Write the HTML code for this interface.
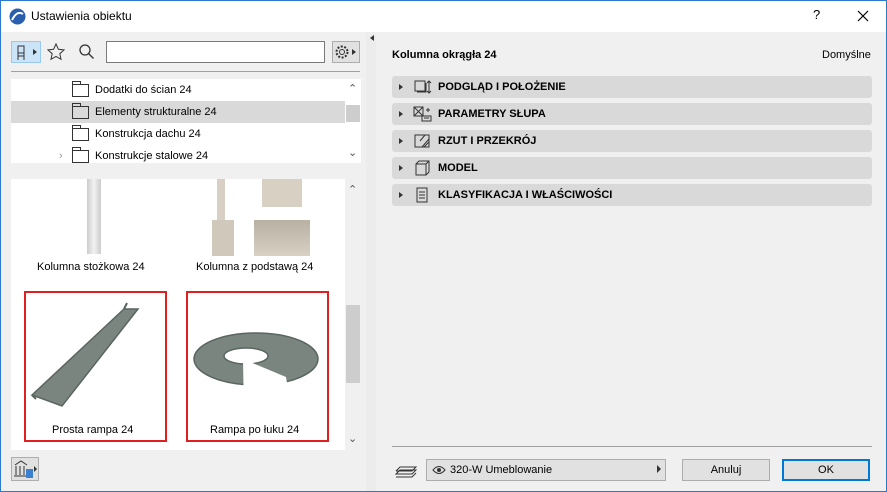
<!DOCTYPE html><html><head><style>
*{margin:0;padding:0;box-sizing:border-box}
body{width:887px;height:492px;overflow:hidden;font-family:"Liberation Sans",sans-serif;font-size:11px;color:#000;background:#f0f0f0;position:relative}
.a{position:absolute}
.win{left:0;top:0;width:887px;height:492px;border:1px solid #2b79d0}
.title{left:1px;top:1px;width:885px;height:31px;background:#fff}
.sec{height:22px;background:#d9d9d9;border-radius:3px;left:392px;width:480px;font-weight:bold;font-size:11px;line-height:22px}
.sec .t{position:absolute;left:46px}
.sec .ar{position:absolute;left:7px;top:8px;border-left:4px solid #333;border-top:3px solid transparent;border-bottom:3px solid transparent}
.sec svg{position:absolute;left:21px;top:3px}
.row{left:11px;width:334px;height:22px;line-height:22px;font-size:11px}
.fold{position:absolute;left:61px;top:5px;width:17px;height:13px;border:1px solid #333}
.fold:before{content:"";position:absolute;left:-1px;top:-4px;width:7px;height:3px;border:1px solid #333;border-bottom:none}
.btn{background:#e1e1e1;border:1px solid #adadad;text-align:center;font-size:12px}
</style></head><body>
<div class="a win"></div>
<div class="a title"></div>
<svg class="a" style="left:9px;top:8px" width="17" height="17"><circle cx="8.5" cy="8.5" r="8" fill="#2a5fb0"/><path d="M3 12 Q8 2 14 6" stroke="#fff" stroke-width="2" fill="none"/></svg>
<div class="a" style="left:31px;top:9px;font-size:12px">Ustawienia obiektu</div>
<div class="a" style="left:813px;top:7px;font-size:13px">?</div>
<svg class="a" style="left:857px;top:10px" width="12" height="12"><path d="M1 1L11 11M11 1L1 11" stroke="#000" stroke-width="1.2"/></svg>
<div class="a" style="left:366px;top:33px;width:10px;height:458px;background:#ececec"></div>
<div class="a" style="left:370px;top:35px;border-right:4px solid #333;border-top:3px solid transparent;border-bottom:3px solid transparent"></div>
<div class="a" style="left:11px;top:41px;width:30px;height:22px;background:#cce4f7;border:1px solid #99c9ef"></div>
<svg class="a" style="left:15px;top:44px" width="24" height="17"><path d="M3 2h6v7H3zM3 9v7M9 9v7M3 12h6" stroke="#333" fill="none"/><path d="M18 5l4 3-4 3z" fill="#333"/></svg>
<svg class="a" style="left:46px;top:42px" width="20" height="20"><path d="M10 2l2.4 5.3 5.6.6-4.2 3.8 1.2 5.6L10 14.4l-5 2.9 1.2-5.6L2 7.9l5.6-.6z" stroke="#333" fill="none"/></svg>
<svg class="a" style="left:78px;top:43px" width="18" height="18"><circle cx="7" cy="7" r="5" stroke="#333" fill="none" stroke-width="1.3"/><path d="M10.5 10.5l5 5" stroke="#333" stroke-width="1.3"/></svg>
<div class="a" style="left:106px;top:41px;width:219px;height:22px;background:#fff;border:1px solid #7a7a7a"></div>
<div class="a" style="left:332px;top:41px;width:28px;height:22px;background:#e1e1e1;border:1px solid #adadad"></div>
<svg class="a" style="left:334px;top:44px" width="24" height="17"><circle cx="8" cy="8" r="5.5" stroke="#333" fill="none" stroke-dasharray="2 1.5" stroke-width="2"/><circle cx="8" cy="8" r="2.5" stroke="#333" fill="none"/><path d="M18 5l4 3-4 3z" fill="#333"/></svg>
<div class="a" style="left:11px;top:71px;width:349px;height:1px;background:#a0a0a0"></div>
<div class="a" style="left:11px;top:79px;width:334px;height:84px;background:#fff"></div>
<div class="a" style="left:345px;top:79px;width:16px;height:84px;background:#fff"></div>
<div class="a" style="left:346px;top:105px;width:14px;height:17px;background:#cdcdcd"></div>
<div class="a" style="left:348px;top:82px;font-size:11px;color:#555">&#8963;</div>
<div class="a" style="left:348px;top:146px;font-size:11px;color:#555">&#8964;</div>
<div class="a row" style="top:79px"><div class="fold"></div><span style="position:absolute;left:84px">Dodatki do ścian 24</span></div>
<div class="a row" style="top:101px;background:#d9d9d9"><div class="fold"></div><span style="position:absolute;left:84px">Elementy strukturalne 24</span></div>
<div class="a row" style="top:123px"><div class="fold"></div><span style="position:absolute;left:84px">Konstrukcja dachu 24</span></div>
<div class="a row" style="top:145px"><span style="position:absolute;left:48px;color:#999">&#8250;</span><div class="fold"></div><span style="position:absolute;left:84px">Konstrukcje stalowe 24</span></div>
<div class="a" style="left:11px;top:179px;width:334px;height:271px;background:#fff"></div>
<div class="a" style="left:345px;top:179px;width:16px;height:271px;background:#f0f0f0"></div>
<div class="a" style="left:346px;top:305px;width:14px;height:78px;background:#cdcdcd"></div>
<div class="a" style="left:348px;top:183px;font-size:11px;color:#555">&#8963;</div>
<div class="a" style="left:348px;top:432px;font-size:11px;color:#555">&#8964;</div>
<div class="a" style="left:87px;top:179px;width:14px;height:75px;background:linear-gradient(90deg,#ccc,#f2f2f2,#ccc)"></div>
<div class="a" style="left:217px;top:179px;width:8px;height:50px;background:#d8d0c4"></div>
<div class="a" style="left:212px;top:220px;width:22px;height:36px;background:#d0c8ba"></div>
<div class="a" style="left:262px;top:179px;width:40px;height:28px;background:#d8d0c2"></div>
<div class="a" style="left:254px;top:220px;width:56px;height:36px;background:linear-gradient(#b8b0a2,#d8d0c2)"></div>
<div class="a" style="left:37px;top:261px;font-size:11px">Kolumna stożkowa 24</div>
<div class="a" style="left:196px;top:261px;font-size:11px">Kolumna z podstawą 24</div>
<div class="a" style="left:24px;top:291px;width:143px;height:151px;border:2px solid #e02020"></div>
<div class="a" style="left:186px;top:291px;width:143px;height:151px;border:2px solid #e02020"></div>
<svg class="a" style="left:26px;top:293px" width="140" height="120"><path d="M6 102L98 16l14 0L36 113z" fill="#7a8580" stroke="#5a6560" stroke-width="1.5"/><path d="M6 102l4 4M98 16l3-6" stroke="#5a6560" stroke-width="2"/></svg>
<svg class="a" style="left:188px;top:293px" width="140" height="120"><path fill-rule="evenodd" d="M6 66a62 26 0 1 0 124 0a62 26 0 1 0 -124 0zM36 63a22 8 0 1 0 44 0a22 8 0 1 0 -44 0z" fill="#7a8580" stroke="#5a6560" stroke-width="1.5"/><path d="M55 66L56 120L104 120L98 84Z" fill="#fff"/></svg>
<div class="a" style="left:52px;top:424px;font-size:11px">Prosta rampa 24</div>
<div class="a" style="left:210px;top:424px;font-size:11px">Rampa po łuku 24</div>
<div class="a" style="left:11px;top:457px;width:28px;height:24px;background:#e1e1e1;border:1px solid #adadad"></div>
<svg class="a" style="left:13px;top:459px" width="25" height="21"><path d="M2 6L8 2 14 6M3 7v9M7 7v9M11 7v9M1 17h14" stroke="#333" fill="none"/><rect x="13" y="10" width="7" height="9" fill="#3a7fd0"/><path d="M21 7l3 3-3 3z" fill="#333"/></svg>
<div class="a" style="left:392px;top:49px;font-weight:bold;font-size:11px">Kolumna okrągła 24</div>
<div class="a" style="left:822px;top:49px;font-size:11px">Domyślne</div>
<div class="a sec" style="top:76px"><div class="ar"></div><svg width="20" height="16"><rect x="2" y="2" width="10" height="10" fill="none" stroke="#333"/><path d="M4 13h9V4M16 2v12M14 4l2-2 2 2M14 12l2 2 2-2" stroke="#333" fill="none"/></svg><span class="t">PODGLĄD I POŁOŻENIE</span></div>
<div class="a sec" style="top:103px"><div class="ar"></div><svg width="20" height="16"><rect x="1" y="1" width="9" height="9" fill="none" stroke="#333"/><path d="M1 1l9 9M10 1L1 10M9 10h9v5H9zM11 12h5M13 4h4M15 2v4" stroke="#333" fill="none"/></svg><span class="t">PARAMETRY SŁUPA</span></div>
<div class="a sec" style="top:130px"><div class="ar"></div><svg width="20" height="16"><rect x="2" y="2" width="14" height="12" fill="none" stroke="#333"/><path d="M9 14L16 6M11 14L16 9M12 2L7 8" stroke="#333"/></svg><span class="t">RZUT I PRZEKRÓJ</span></div>
<div class="a sec" style="top:157px"><div class="ar"></div><svg width="20" height="16"><path d="M3 4h10v11H3zM3 4l3-3h10v11l-3 3M13 4l3-3" stroke="#333" fill="none"/></svg><span class="t">MODEL</span></div>
<div class="a sec" style="top:184px"><div class="ar"></div><svg width="20" height="16"><rect x="4" y="1" width="10" height="14" fill="none" stroke="#333"/><path d="M6 5h6M6 8h6M6 11h6" stroke="#333"/></svg><span class="t">KLASYFIKACJA I WŁAŚCIWOŚCI</span></div>
<div class="a" style="left:392px;top:446px;width:480px;height:1px;background:#a0a0a0"></div>
<svg class="a" style="left:394px;top:462px" width="24" height="18"><path d="M2 12l4-4h16l-4 4zM2 15h16l4-4M2 9l4-4h16l-4 4H2" stroke="#333" fill="none"/></svg>
<div class="a btn" style="left:426px;top:459px;width:240px;height:22px;text-align:left"></div>
<svg class="a" style="left:432px;top:465px" width="14" height="10"><path d="M1 5Q7-2 13 5Q7 12 1 5z" stroke="#333" fill="none"/><circle cx="7" cy="5" r="2" fill="#333"/></svg>
<div class="a" style="left:450px;top:464px;font-size:11px">320-W Umeblowanie</div>
<div class="a" style="left:657px;top:465px;border-left:4px solid #333;border-top:4px solid transparent;border-bottom:4px solid transparent"></div>
<div class="a btn" style="left:682px;top:459px;width:88px;height:22px;line-height:20px;font-size:11px">Anuluj</div>
<div class="a btn" style="left:782px;top:459px;width:88px;height:22px;line-height:18px;border:2px solid #0078d7;font-size:11px">OK</div>
</body></html>
